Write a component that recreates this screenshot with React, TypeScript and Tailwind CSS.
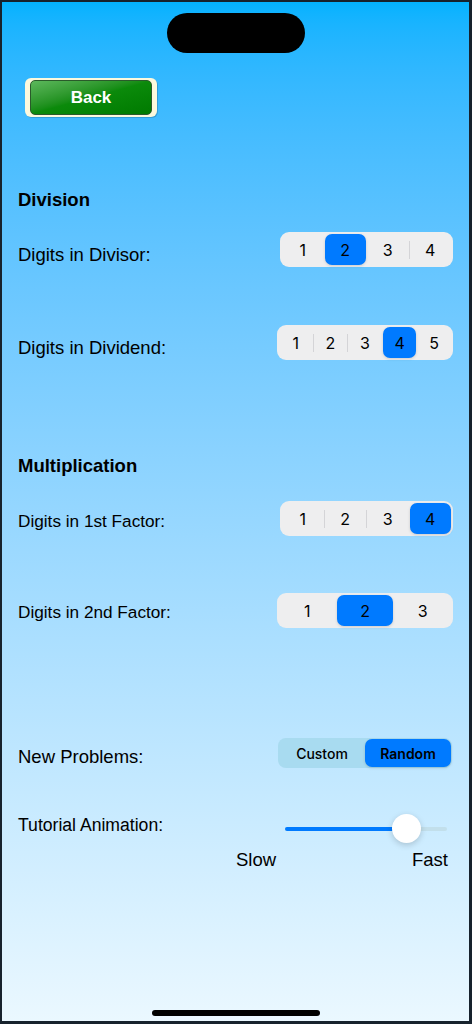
import React from 'react';

const LABEL_FONT = { fontFamily: '"Liberation Sans", Arial, sans-serif' };
const UI_FONT = { fontFamily: 'Inter, "Noto Sans", sans-serif' };

type SegmentedProps = {
  options: string[];
  selected: number;
  width: number;
};

// iOS-style segmented picker, separators hidden next to the selected segment
const Segmented: React.FC<SegmentedProps> = ({ options, selected, width }) => {
  return (
    <div
      className="flex h-[35px] items-center rounded-[9px] bg-[#eeeeef] p-[2px]"
      style={{ width, ...UI_FONT }}
    >
      {options.map((opt, i) => (
        <React.Fragment key={opt}>
          {i > 0 && (
            <div
              className={
                i === selected || i - 1 === selected
                  ? 'h-[18px] w-px bg-transparent'
                  : 'h-[18px] w-px bg-[#d4d4d7]'
              }
            />
          )}
          <div
            className={
              i === selected
                ? 'flex h-full flex-1 items-center justify-center rounded-[7px] bg-[#007aff] text-[16px] text-black shadow-[0_1px_3px_rgba(0,0,0,0.15)]'
                : 'flex h-full flex-1 items-center justify-center text-[16px] text-black'
            }
          >
            {opt}
          </div>
        </React.Fragment>
      ))}
    </div>
  );
};

const App: React.FC = () => {
  return (
    <div className="relative h-[1024px] w-[472px] overflow-hidden bg-gradient-to-b from-[#00b2ff] to-[#ebf8ff]">
      <div className="flex h-full flex-col px-[18px] text-black">
        {/* dynamic island */}
        <div className="mx-auto mt-[13px] h-[40px] w-[138px] rounded-full bg-black" />

        {/* back button */}
        <div className="ml-[7px] mt-[25px] flex h-[39px] w-[132px] rounded-[6px] bg-[#fdf9dd] px-[5px] py-[2px] shadow-[1px_1px_0_rgba(0,0,0,0.15)]">
          <div
            className="flex flex-1 items-center justify-center rounded-[5px] border border-[#2a5a2a] bg-gradient-to-br from-[#5cb85c] via-[#0b8a0b] to-[#007a00] text-[17px] font-bold text-white"
            style={LABEL_FONT}
          >
            Back
          </div>
        </div>

        <div className="mt-[72px] text-[18.5px] font-bold leading-[22px]" style={LABEL_FONT}>
          Division
        </div>

        <div className="mt-[21px] flex h-[35px] items-center justify-between">
          <span className="pt-[10px] text-[18.5px] leading-[22px]" style={LABEL_FONT}>
            Digits in Divisor:
          </span>
          <div className="mr-[1px]">
            <Segmented options={['1', '2', '3', '4']} selected={1} width={173} />
          </div>
        </div>

        <div className="mt-[58px] flex h-[35px] items-center justify-between">
          <span className="pt-[10px] text-[18.5px] leading-[22px]" style={LABEL_FONT}>
            Digits in Dividend:
          </span>
          <div className="mr-[1px]">
            <Segmented options={['1', '2', '3', '4', '5']} selected={3} width={176} />
          </div>
        </div>

        <div className="mt-[95px] text-[18.5px] font-bold leading-[22px]" style={LABEL_FONT}>
          Multiplication
        </div>

        <div className="mt-[24px] flex h-[35px] items-center justify-between">
          <span className="pt-[5px] text-[17.2px] leading-[22px]" style={LABEL_FONT}>
            Digits in 1st Factor:
          </span>
          <div className="mr-[1px]">
            <Segmented options={['1', '2', '3', '4']} selected={3} width={173} />
          </div>
        </div>

        <div className="mt-[57px] flex h-[35px] items-center justify-between">
          <span className="pt-[3px] text-[17.2px] leading-[22px]" style={LABEL_FONT}>
            Digits in 2nd Factor:
          </span>
          <div className="mr-[1px]">
            <Segmented options={['1', '2', '3']} selected={1} width={176} />
          </div>
        </div>

        {/* new problems mode */}
        <div className="mt-[110px] flex h-[30px] items-center justify-between">
          <span className="pt-[8px] text-[18.5px] leading-[22px]" style={LABEL_FONT}>
            New Problems:
          </span>
          <div
            className="mr-[2px] flex h-[30px] w-[174px] rounded-[8px] bg-[#a8dbf0] p-[1px]"
            style={UI_FONT}
          >
            <div className="flex flex-1 items-center justify-center text-[14px] font-medium">
              Custom
            </div>
            <div className="flex flex-1 items-center justify-center rounded-[7px] bg-[#007aff] text-[14px] font-semibold shadow-[0_1px_3px_rgba(0,0,0,0.15)]">
              Random
            </div>
          </div>
        </div>

        {/* animation speed */}
        <div className="mt-[46px] flex h-[30px] items-center justify-between">
          <span className="pb-[8px] text-[17.6px] leading-[22px]" style={LABEL_FONT}>
            Tutorial Animation:
          </span>
          <div className="relative mr-[7px] flex h-[30px] w-[162px] items-center">
            <div className="flex h-[4px] w-full overflow-hidden rounded-full bg-[#c2dfeb]">
              <div className="h-full w-[121px] bg-[#007aff]" />
            </div>
            <div className="absolute left-[107px] top-0 h-[29px] w-[29px] rounded-full bg-white shadow-[0_2px_6px_rgba(0,0,0,0.18)]" />
          </div>
        </div>

        <div className="mt-[5px] flex justify-end">
          <div
            className="mr-[6px] flex w-[212px] justify-between text-[18.5px] leading-[22px]"
            style={LABEL_FONT}
          >
            <span>Slow</span>
            <span>Fast</span>
          </div>
        </div>

        {/* home indicator */}
        <div className="mx-auto mb-[8px] mt-auto h-[6px] w-[168px] rounded-full bg-black" />
      </div>

      {/* device frame edge */}
      <div className="pointer-events-none absolute inset-0 border-b-[3px] border-l-2 border-r-[3px] border-t-2 border-[#17222d]" />
    </div>
  );
};

export default App;
